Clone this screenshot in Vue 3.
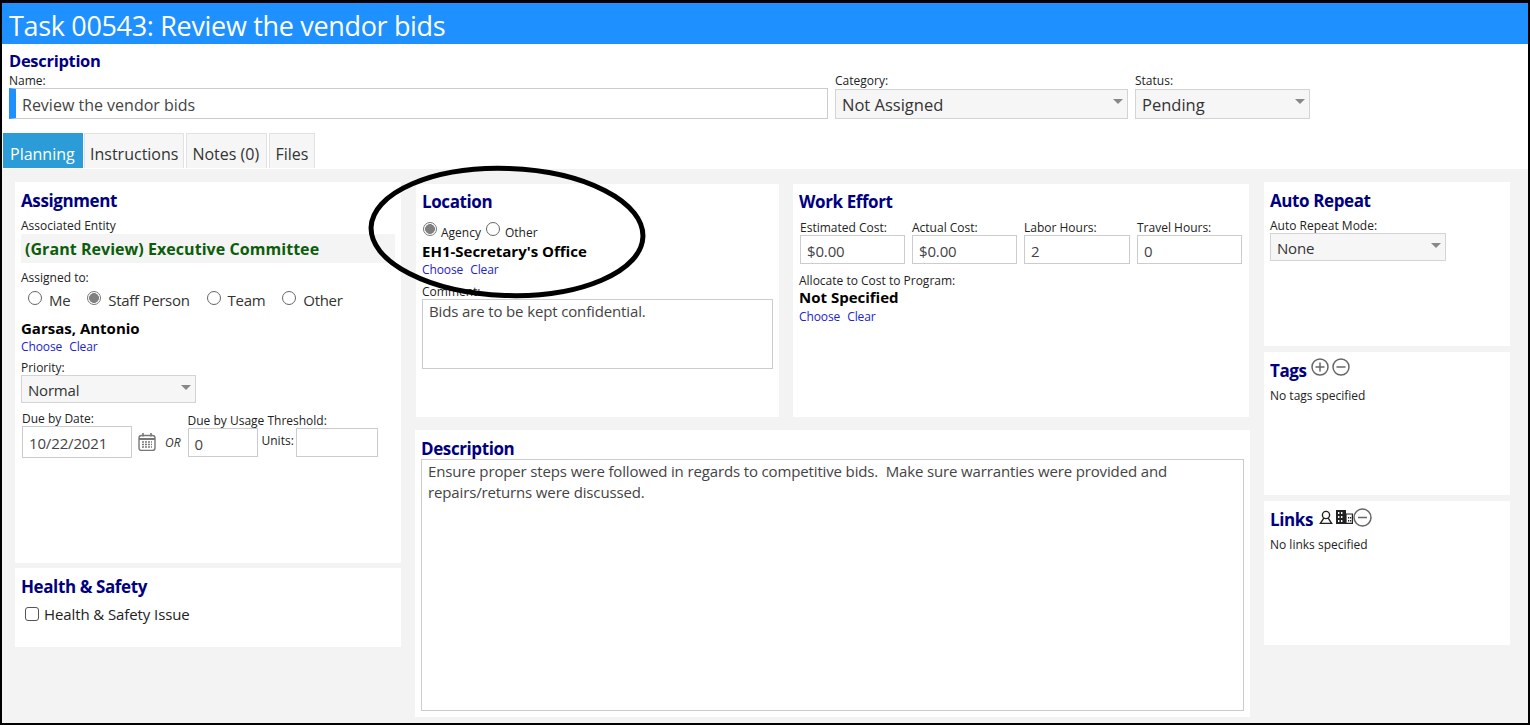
<script setup>
const assignOptions = [
  { label: 'Me', checked: false },
  { label: 'Staff Person', checked: true },
  { label: 'Team', checked: false },
  { label: 'Other', checked: false },
]

const effortFields = [
  { label: 'Estimated Cost:', value: '$0.00' },
  { label: 'Actual Cost:', value: '$0.00' },
  { label: 'Labor Hours:', value: '2' },
  { label: 'Travel Hours:', value: '0' },
]

const tabs = ['Planning', 'Instructions', 'Notes (0)', 'Files']
</script>

<template>
  <div class="page">
    <header class="title-bar">Task 00543: Review the vendor bids</header>

    <section class="top-form">
      <h2 class="top-heading">Description</h2>
      <div class="top-row">
        <div class="field name-field">
          <label class="small">Name:</label>
          <div class="name-input">Review the vendor bids</div>
        </div>
        <div class="field category-field">
          <label class="small">Category:</label>
          <div class="select big">Not Assigned<i class="caret"></i></div>
        </div>
        <div class="field status-field">
          <label class="small">Status:</label>
          <div class="select big">Pending<i class="caret"></i></div>
        </div>
      </div>
    </section>

    <nav class="tabs">
      <div v-for="(tab, i) in tabs" :key="tab" class="tab" :class="{ active: i === 0 }">{{ tab }}</div>
    </nav>

    <main class="planning">
      <div class="col-left">
        <section class="card assignment">
          <h3>Assignment</h3>
          <div class="small entity-label">Associated Entity</div>
          <div class="entity">(Grant Review) Executive Committee</div>
          <div class="small assigned-label">Assigned to:</div>
          <div class="radios">
            <label v-for="opt in assignOptions" :key="opt.label" class="radio-item">
              <span class="radio" :class="{ on: opt.checked }"></span>{{ opt.label }}
            </label>
          </div>
          <div class="strong person">Garsas, Antonio</div>
          <div class="links"><a>Choose</a><a>Clear</a></div>
          <div class="small priority-label">Priority:</div>
          <div class="select priority">Normal<i class="caret"></i></div>
          <div class="due-row">
            <div class="due-date">
              <div class="small">Due by Date:</div>
              <div class="input date-input">10/22/2021</div>
            </div>
            <svg class="calendar" width="18" height="18" viewBox="0 0 18 18" fill="none">
              <rect x="1" y="2.5" width="16" height="15" rx="2.5" stroke="#777" stroke-width="1.4" />
              <path d="M1 6h16" stroke="#777" stroke-width="2" />
              <path d="M5 0v3.5M13 0v3.5" stroke="#777" stroke-width="1.6" />
              <path d="M4 9h10M4 11.5h10M4 14h10" stroke="#777" stroke-width="1.5" stroke-dasharray="2 1" />
            </svg>
            <span class="or">OR</span>
            <div class="due-usage">
              <div class="small">Due by Usage Threshold:</div>
              <div class="input usage-input">0</div>
            </div>
            <div class="small units-label">Units:</div>
            <div class="input units-input"></div>
          </div>
        </section>
        <section class="card health">
          <h3>Health &amp; Safety</h3>
          <label class="check-row"><span class="checkbox"></span>Health &amp; Safety Issue</label>
        </section>
      </div>

      <div class="col-mid">
        <div class="mid-top">
          <section class="card location">
            <h3>Location</h3>
            <div class="loc-radios">
              <span class="radio on"></span><span class="small">Agency</span>
              <span class="radio"></span><span class="small">Other</span>
            </div>
            <div class="strong loc-name">EH1-Secretary's Office</div>
            <div class="links"><a>Choose</a><a>Clear</a></div>
            <div class="small comment-label">Comment:</div>
            <div class="textarea comment">Bids are to be kept confidential.</div>
          </section>
          <section class="card effort">
            <h3>Work Effort</h3>
            <div class="effort-row">
              <div v-for="f in effortFields" :key="f.label" class="effort-field">
                <div class="small">{{ f.label }}</div>
                <div class="input">{{ f.value }}</div>
              </div>
            </div>
            <div class="small allocate-label">Allocate to Cost to Program:</div>
            <div class="strong not-specified">Not Specified</div>
            <div class="links"><a>Choose</a><a>Clear</a></div>
          </section>
        </div>
        <section class="card description">
          <h3>Description</h3>
          <div class="textarea desc-text">Ensure proper steps were followed in regards to competitive bids.&nbsp; Make sure warranties were provided and<br />repairs/returns were discussed.</div>
        </section>
      </div>

      <div class="col-right">
        <section class="card repeat">
          <h3>Auto Repeat</h3>
          <div class="small repeat-label">Auto Repeat Mode:</div>
          <div class="select repeat-select">None<i class="caret"></i></div>
        </section>
        <section class="card tags">
          <div class="side-head">
            <h3>Tags</h3>
            <svg class="round-btn" width="18" height="18" viewBox="0 0 18 18" fill="none">
              <circle cx="9" cy="9" r="8" stroke="#666" stroke-width="1.5" />
              <path d="M4.5 9h9M9 4.5v9" stroke="#666" stroke-width="1.5" />
            </svg>
            <svg class="round-btn" width="18" height="18" viewBox="0 0 18 18" fill="none">
              <circle cx="9" cy="9" r="8" stroke="#666" stroke-width="1.5" />
              <path d="M4.5 9h9" stroke="#666" stroke-width="1.5" />
            </svg>
          </div>
          <div class="small none-text">No tags specified</div>
        </section>
        <section class="card side-links">
          <div class="side-head">
            <h3>Links</h3>
            <svg class="person-icon" width="14" height="15" viewBox="0 0 14 15" fill="none">
              <circle cx="7" cy="5" r="3.6" stroke="#222" stroke-width="1.4" />
              <path d="M4.8 8.2 1.4 13.4h11.2L9.2 8.2" stroke="#222" stroke-width="1.4" />
            </svg>
            <svg class="building-icon" width="17" height="15" viewBox="0 0 17 15">
              <path d="M0 1h10v14H0z" fill="#222" />
              <path d="M10 5h6.4v9.4H10z" fill="none" stroke="#222" stroke-width="1.2" />
              <path d="M2 3h1.4v2H2zM5 3h1.4v2H5zM2 7h1.4v2H2zM5 7h1.4v2H5zM2 11h1.4v2H2zM5 11h1.4v2H5z" fill="#fff" />
              <path d="M12 8h1.2v1.4H12zM14 8h1.2v1.4H14zM12 11h1.2v1.4H12zM14 11h1.2v1.4H14z" fill="#222" />
            </svg>
            <svg class="round-btn link-minus" width="19" height="19" viewBox="0 0 19 19" fill="none">
              <circle cx="9.5" cy="9.5" r="8.5" stroke="#666" stroke-width="1.5" />
              <path d="M5 9.5h9" stroke="#666" stroke-width="1.5" />
            </svg>
          </div>
          <div class="small none-text">No links specified</div>
        </section>
      </div>
    </main>

    <svg class="callout" width="290" height="140" viewBox="0 0 290 140" fill="none">
      <ellipse cx="144" cy="67" rx="136" ry="63.5" transform="rotate(2 144 67)" stroke="#000" stroke-width="5" />
    </svg>
  </div>
</template>

<style scoped>
.page {
  position: relative;
  box-sizing: border-box;
  width: 1530px;
  height: 725px;
  border-style: solid;
  border-color: #000;
  border-width: 3px 2px 2px 2px;
  background: #f3f3f3;
  overflow: hidden;
  font-family: 'Open Sans', sans-serif;
  color: #222;
  display: flex;
  flex-direction: column;
}
.title-bar {
  height: 41px;
  flex: none;
  background: #1e90ff;
  color: #fff;
  font-size: 27px;
  line-height: 46px;
  padding-left: 7px;
  letter-spacing: -0.33px;
  white-space: nowrap;
}
.top-form {
  height: 89px;
  flex: none;
  background: #fff;
  padding-left: 7px;
}
.top-heading {
  margin: 0;
  padding-top: 5px;
  font-size: 16.5px;
  line-height: 24px;
  font-weight: 700;
  color: #000080;
  letter-spacing: -0.3px;
}
.top-row {
  display: flex;
  gap: 7px;
}
.field label {
  display: block;
  height: 15px;
  line-height: 15px;
}
.small {
  font-size: 12px;
  line-height: 15px;
  color: #222;
  white-space: nowrap;
}
.name-field {
  width: 819px;
}
.category-field {
  width: 293px;
}
.status-field {
  width: 175px;
}
.name-input {
  box-sizing: border-box;
  height: 31px;
  border: 1px solid #ccc;
  border-left: 7px solid #1e90ff;
  padding-left: 6px;
  font-size: 16px;
  line-height: 33px;
  color: #444;
}
.select {
  position: relative;
  box-sizing: border-box;
  height: 30px;
  margin-top: 1px;
  border: 1px solid #d4d4d4;
  background: #f6f6f6;
  padding-left: 6px;
  font-size: 15px;
  letter-spacing: -0.2px;
  line-height: 30px;
  color: #333;
}
.select.big {
  font-size: 16.5px;
  letter-spacing: 0;
}
.caret {
  position: absolute;
  right: 4px;
  top: 9px;
  width: 0;
  height: 0;
  border-left: 5px solid transparent;
  border-right: 5px solid transparent;
  border-top: 5px solid #888;
}
.tabs {
  height: 36px;
  flex: none;
  background: #fff;
  padding-left: 1px;
  display: flex;
  gap: 1px;
  align-items: stretch;
}
.tab {
  box-sizing: border-box;
  height: 35px;
  padding: 0 5px;
  border: 1px solid #e2e2e2;
  border-bottom: none;
  background: #f6f6f6;
  font-size: 16px;
  line-height: 40px;
  color: #333;
}
.tab.active {
  width: 80px;
  padding: 0 6px;
  background: #2b9cd8;
  border-color: #2b9cd8;
  color: #fff;
}
.tab:nth-child(2) {
  margin-right: 1px;
}
.tab:nth-child(3) {
  width: 81px;
  margin-right: 1px;
}
.tab:nth-child(4) {
  width: 46px;
}
.planning {
  flex: 1;
  display: flex;
  align-items: flex-start;
  padding-left: 13px;
  min-height: 0;
}
.card {
  background: #fff;
  box-sizing: border-box;
}
.card h3 {
  margin: 0;
  font-size: 17px;
  line-height: 22px;
  font-weight: 700;
  color: #000080;
  letter-spacing: -0.4px;
}
.strong {
  font-size: 15px;
  font-weight: 700;
  color: #000;
  line-height: 18px;
}
.links {
  display: flex;
  gap: 7px;
  margin-top: 2px;
  font-size: 12px;
  letter-spacing: -0.1px;
  line-height: 15px;
  color: #2222cc;
}
.not-specified + .links {
  margin-top: 3px;
}
.col-left {
  width: 386px;
  margin-top: 13px;
  display: flex;
  flex-direction: column;
  gap: 5px;
}
.assignment {
  height: 381px;
  padding: 8px 6px;
}
.entity-label {
  margin-top: 6px;
}
.entity {
  box-sizing: border-box;
  height: 29px;
  margin-top: 1px;
  background: #f4f4f4;
  padding-left: 4px;
  font-size: 16px;
  font-weight: 700;
  color: #0b5d0b;
  line-height: 31px;
  letter-spacing: 0.05px;
  width: 374px;
}
.assigned-label {
  margin-top: 7px;
}
.radios {
  display: flex;
  gap: 17px;
  margin-top: 5px;
  padding-left: 7px;
}
.radio-item {
  display: flex;
  align-items: center;
  gap: 7px;
  font-size: 15px;
  letter-spacing: -0.3px;
  line-height: 20px;
  color: #333;
}
.radio {
  flex: none;
  display: inline-block;
  box-sizing: border-box;
  width: 14px;
  height: 14px;
  border: 1px solid #666;
  border-radius: 50%;
  background: #fff;
  margin-top: -4px;
}
.radio.on {
  border-color: #777;
  background: radial-gradient(circle, #808080 0 4.6px, #fff 5.2px);
}
.person {
  margin-top: 9px;
}
.priority-label {
  margin-top: 6px;
}
.priority {
  width: 175px;
  height: 28px;
  line-height: 28px;
  margin-top: 0;
}
.priority .caret {
  top: 9px;
}
.due-row {
  display: flex;
  align-items: flex-end;
  margin-top: 8px;
  padding-left: 1px;
}
.input {
  box-sizing: border-box;
  height: 30px;
  border: 1px solid #ccc;
  background: #fff;
  padding-left: 6px;
  font-size: 15px;
  letter-spacing: -0.15px;
  line-height: 30px;
  color: #444;
  white-space: nowrap;
}
.date-input {
  width: 110px;
  height: 32px;
  line-height: 33px;
}
.calendar {
  flex: none;
  margin: 0 0 7px 6px;
}
.or {
  flex: none;
  font-size: 12px;
  font-style: italic;
  color: #333;
  margin: 0 0 8px 9px;
  line-height: 15px;
}
.due-usage {
  flex: none;
  width: 70px;
  margin-left: 7px;
  margin-bottom: 1px;
}
.usage-input {
  width: 70px;
  height: 29px;
  line-height: 30px;
}
.units-label {
  flex: none;
  margin: 0 2px 10px 4px;
}
.units-input {
  flex: none;
  width: 82px;
  height: 29px;
  margin-bottom: 1px;
}
.health {
  height: 79px;
  padding: 8px 6px;
}
.check-row {
  display: flex;
  align-items: center;
  gap: 5px;
  margin-top: 6px;
  padding-left: 4px;
  font-size: 15px;
  letter-spacing: -0.1px;
  line-height: 20px;
  color: #222;
}
.checkbox {
  box-sizing: border-box;
  width: 14px;
  height: 14px;
  border: 1px solid #555;
  border-radius: 3px;
  background: #fff;
}
.col-mid {
  width: 835px;
  margin-left: 14px;
  margin-top: 15px;
  display: flex;
  flex-direction: column;
  gap: 13px;
}
.mid-top {
  display: flex;
  gap: 14px;
  padding-left: 1px;
}
.location {
  width: 363px;
  height: 233px;
  padding: 7px 6px;
}
.loc-radios {
  display: flex;
  align-items: center;
  margin-top: 9px;
  height: 16px;
}
.loc-radios .radio {
  margin: -2px 4px 0 1px;
}
.loc-radios .small + .radio {
  margin: -2px 5px 0 5px;
}
.loc-radios .small {
  margin-top: 4px;
}
.loc-name {
  margin-top: 4px;
}
.comment-label {
  margin-top: 7px;
}
.textarea {
  box-sizing: border-box;
  border: 1px solid #ccc;
  background: #fff;
  padding: 1px 6px;
  font-size: 15px;
  letter-spacing: -0.14px;
  line-height: 21px;
  color: #444;
}
.comment {
  width: 351px;
  height: 70px;
}
.effort {
  width: 456px;
  height: 233px;
  padding: 7px 6px;
}
.effort-row {
  display: flex;
  gap: 7px;
  margin-top: 7px;
  padding-left: 1px;
}
.effort-field {
  width: 105px;
}
.effort-field:nth-child(3) {
  width: 106px;
}
.effort-field .input {
  height: 29px;
}
.allocate-label {
  margin-top: 9px;
}
.not-specified {
  margin-top: 0;
}
.description {
  height: 287px;
  padding: 8px 6px;
}
.description h3 {
  margin-bottom: -1px;
}
.desc-text {
  height: 252px;
  width: 823px;
  white-space: nowrap;
}
.col-right {
  width: 246px;
  margin-left: 14px;
  margin-top: 13px;
  display: flex;
  flex-direction: column;
  gap: 6px;
}
.repeat {
  height: 164px;
  padding: 8px 6px;
}
.repeat-label {
  margin-top: 6px;
}
.repeat-select {
  width: 176px;
  height: 28px;
  line-height: 28px;
  margin-top: 0;
}
.tags,
.side-links {
  height: 143px;
  padding: 8px 6px;
}
.side-links {
  height: 144px;
}
.side-head {
  display: flex;
  align-items: flex-start;
}
.side-head h3 {
  margin-right: 4px;
}
.round-btn {
  flex: none;
  margin: -2px 3px 0 0;
}
.none-text {
  margin-top: 6px;
}
.person-icon {
  flex: none;
  margin: 1px 3px 0 2px;
}
.building-icon {
  flex: none;
  margin: 0;
}
.link-minus {
  margin-top: -1px;
}
.callout {
  position: absolute;
  left: 361px;
  top: 162px;
}
</style>

<style>
body {
  margin: 0;
}
</style>
